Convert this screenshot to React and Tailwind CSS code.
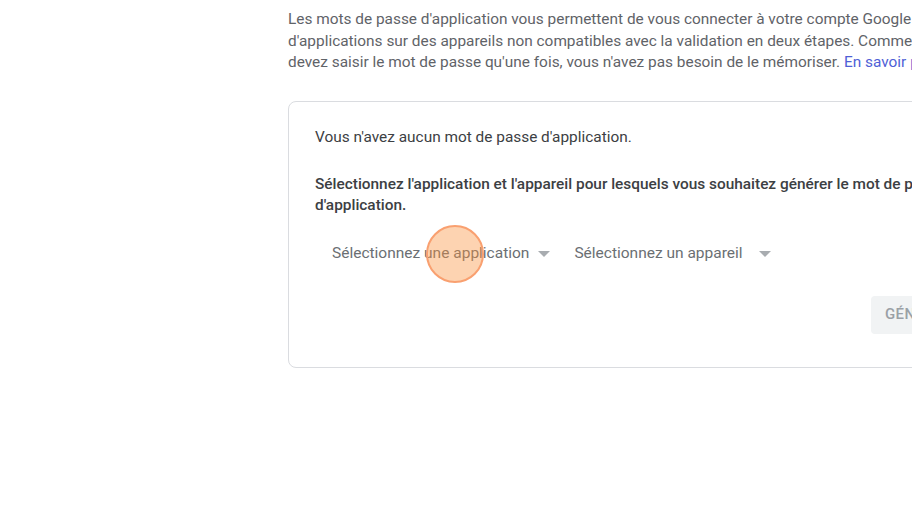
export default function App() {
  return (
    <div className="w-[912px] h-[506px] overflow-hidden bg-white font-['Roboto',sans-serif] relative">
      <div className="ml-[288px] w-[800px] pt-[9px]">
        <div className="text-[15.4px] leading-[21.5px] text-[#5f6368] whitespace-nowrap">
          <div>Les mots de passe d'application vous permettent de vous connecter à votre compte Google à partir</div>
          <div>d'applications sur des appareils non compatibles avec la validation en deux étapes. Comme vous ne</div>
          <div>
            devez saisir le mot de passe qu'une fois, vous n'avez pas besoin de le mémoriser.{' '}
            <span className="text-[#4f5fd6]">En savoir plus</span>
          </div>
        </div>

        <div className="mt-[27px] h-[267px] border border-[#dadce0] rounded-lg px-[26px] pt-[25px]">
          <p className="text-[15.4px] leading-[21px] text-[#3c4043] whitespace-nowrap">
            Vous n'avez aucun mot de passe d'application.
          </p>
          <div className="mt-[26px] text-[15.4px] leading-[21px] font-medium text-[#3c4043] whitespace-nowrap">
            <div>Sélectionnez l'application et l'appareil pour lesquels vous souhaitez générer le mot de passe</div>
            <div>d'application.</div>
          </div>
          <div className="mt-[20px] flex items-center pl-[17px] gap-[24px] text-[15.5px] text-[#6b6f73]">
            <div className="flex items-center h-[36px] gap-[9px]">
              <span>Sélectionnez une application</span>
              <Caret />
            </div>
            <div className="flex items-center h-[36px] gap-[16px]">
              <span>Sélectionnez un appareil</span>
              <Caret />
            </div>
          </div>
          <div className="mt-[24px] pl-[556px]">
            <button className="h-[38px] px-[14px] rounded bg-[#f1f3f4] text-[#9aa0a6] text-[15px] font-medium tracking-wide">
              GÉNÉRER
            </button>
          </div>
        </div>
      </div>
      <div className="absolute left-[426px] top-[225px] w-[58px] h-[58px] rounded-full bg-[#fb923c]/40 border-2 border-[#f9a070]" />
    </div>
  )
}

function Caret() {
  return (
    <svg width="12" height="6" viewBox="0 0 12 6">
      <path d="M0 0 L12 0 L6 6 Z" fill="#a8acb0" />
    </svg>
  )
}
